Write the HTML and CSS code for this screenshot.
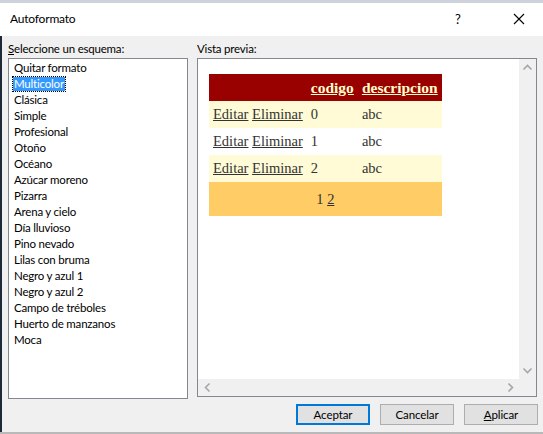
FILE: index.html
```html
<!DOCTYPE html>
<html lang="es">
<head>
<meta charset="utf-8">
<title>Autoformato</title>
<link rel="stylesheet" href="styles.css">
</head>
<body>
<div class="window">
  <div class="topstrip"></div>
  <div class="titlebar">
    <span class="title">Autoformato</span>
    <span class="help">?</span>
    <span class="close"><svg width="12" height="12" viewBox="0 0 12 12"><path d="M1 1 L11 11 M11 1 L1 11" stroke="#000" stroke-width="1.1" fill="none"/></svg></span>
  </div>
  <div class="client">
    <div class="panes">
      <div class="col left">
        <div class="label"><u>S</u>eleccione un esquema:</div>
        <ul class="listbox">
          <li>Quitar formato</li>
          <li><span class="sel">Multicolor</span></li>
          <li>Clásica</li>
          <li>Simple</li>
          <li>Profesional</li>
          <li>Otoño</li>
          <li>Océano</li>
          <li>Azúcar moreno</li>
          <li>Pizarra</li>
          <li>Arena y cielo</li>
          <li>Día lluvioso</li>
          <li>Pino nevado</li>
          <li>Lilas con bruma</li>
          <li>Negro y azul 1</li>
          <li>Negro y azul 2</li>
          <li>Campo de tréboles</li>
          <li>Huerto de manzanos</li>
          <li>Moca</li>
        </ul>
      </div>
      <div class="col right">
        <div class="label">Vista previa:</div>
        <div class="preview">
          <div class="view">
            <table class="grid">
              <tr class="head"><th></th><th><a>codigo</a></th><th><a>descripcion</a></th></tr>
              <tr class="row"><td><a>Editar</a> <a>Eliminar</a></td><td>0</td><td>abc</td></tr>
              <tr class="alt"><td><a>Editar</a> <a>Eliminar</a></td><td>1</td><td>abc</td></tr>
              <tr class="row"><td><a>Editar</a> <a>Eliminar</a></td><td>2</td><td>abc</td></tr>
              <tr class="pager"><td colspan="3">1 <a>2</a></td></tr>
            </table>
          </div>
          <div class="vscroll">
            <svg width="17" height="17" viewBox="0 0 17 17"><path d="M4.5 10.5 L8.5 6.5 L12.5 10.5" stroke="#a6a6a6" stroke-width="1.6" fill="none"/></svg>
            <svg width="17" height="17" viewBox="0 0 17 17"><path d="M4.5 6.5 L8.5 10.5 L12.5 6.5" stroke="#a6a6a6" stroke-width="1.6" fill="none"/></svg>
          </div>
          <div class="hscroll">
            <svg width="17" height="17" viewBox="0 0 17 17"><path d="M10.5 4.5 L6.5 8.5 L10.5 12.5" stroke="#a6a6a6" stroke-width="1.6" fill="none"/></svg>
            <svg width="17" height="17" viewBox="0 0 17 17"><path d="M6.5 4.5 L10.5 8.5 L6.5 12.5" stroke="#a6a6a6" stroke-width="1.6" fill="none"/></svg>
          </div>
          <div class="corner"></div>
        </div>
      </div>
    </div>
    <div class="buttons">
      <button class="btn default">Aceptar</button>
      <button class="btn">Cancelar</button>
      <button class="btn"><u>A</u>plicar</button>
    </div>
  </div>
</div>
</body>
</html>
```

FILE: styles.css
```css
html, body {
  margin: 0;
  padding: 0;
}
body {
  width: 543px;
  height: 434px;
  overflow: hidden;
  background: #b9b9b9;
  font-family: Lato, "Noto Sans", sans-serif;
  font-size: 11.5px;
  letter-spacing: -0.2px;
  color: #000;
}
.window {
  width: 543px;
  height: 432px;
  display: flex;
  flex-direction: column;
  background: #f0f0f0;
  box-shadow: inset 2px 0 0 #1e2a38;
}
.topstrip {
  height: 3px;
  background: #cdd2dc;
}
.titlebar {
  height: 33px;
  background: #fff;
  display: flex;
  align-items: center;
  padding-left: 10px;
}
.title {
  flex: 1;
  font-size: 12px;
  margin-top: -2px;
}
.help {
  width: 20px;
  margin-right: 38px;
  font-size: 13px;
  margin-top: -2px;
}
.close {
  width: 30px;
  display: flex;
  align-items: center;
  margin-top: -2px;
}
.client {
  flex: 1;
  display: flex;
  flex-direction: column;
  padding: 5px 5px 0 8px;
}
.panes {
  display: flex;
  gap: 9px;
}
.col {
  display: flex;
  flex-direction: column;
}
.label {
  height: 17px;
  line-height: 15px;
}
.left .listbox {
  height: 338px;
  margin: 0;
  padding: 1px 0 0 5px;
  box-sizing: content-box;
  width: 173px;
  list-style: none;
  background: #fff;
  border: 1px solid #828790;
}
.listbox li {
  height: 16px;
  line-height: 16px;
  white-space: nowrap;
}
.sel {
  display: inline-block;
  margin-left: -1px;
  padding: 0 1px 0 1px;
  height: 14px;
  line-height: 14px;
  background: #3399ff;
  color: #fff;
  outline: 1px dotted #000;
  outline-offset: 0;
}
.preview {
  width: 338px;
  height: 337px;
  border: 1px solid #828790;
  background: #f0f0f0;
  display: grid;
  grid-template-columns: 1fr 17px;
  grid-template-rows: 1fr 17px;
}
.view {
  background: #fff;
  padding: 15px 0 0 11px;
  overflow: hidden;
}
.vscroll {
  display: flex;
  flex-direction: column;
  justify-content: space-between;
}
.hscroll {
  display: flex;
  justify-content: space-between;
  padding: 0 0 0 1px;
}
.grid {
  border-collapse: collapse;
  font-family: "Liberation Serif", "Times New Roman", serif;
  font-size: 14.5px;
  letter-spacing: 0;
  color: #333333;
}
.grid th, .grid td {
  padding: 4px;
  height: 19px;
  line-height: 19px;
  text-align: left;
  white-space: nowrap;
}
.grid a {
  text-decoration: underline;
  color: inherit;
}
.head th {
  background: #990000;
  color: #ffffcc;
  font-weight: bold;
  font-size: 15.5px;
}
.row {
  background: #fffbd6;
}
.alt {
  background: #ffffff;
}
.pager td {
  background: #ffcc66;
  text-align: center;
  height: 24px;
  padding: 5px 4px;
}
.buttons {
  display: flex;
  justify-content: flex-end;
  gap: 10px;
  margin-top: 5px;
}
.btn {
  width: 74px;
  height: 21px;
  background: #e1e1e1;
  border: 1px solid #adadad;
  font-family: Lato, "Noto Sans", sans-serif;
  font-size: 11.5px;
  letter-spacing: -0.1px;
  color: #000;
  padding: 0;
  line-height: 17px;
}
.btn.default {
  border: 2px solid #0078d7;
}
```
